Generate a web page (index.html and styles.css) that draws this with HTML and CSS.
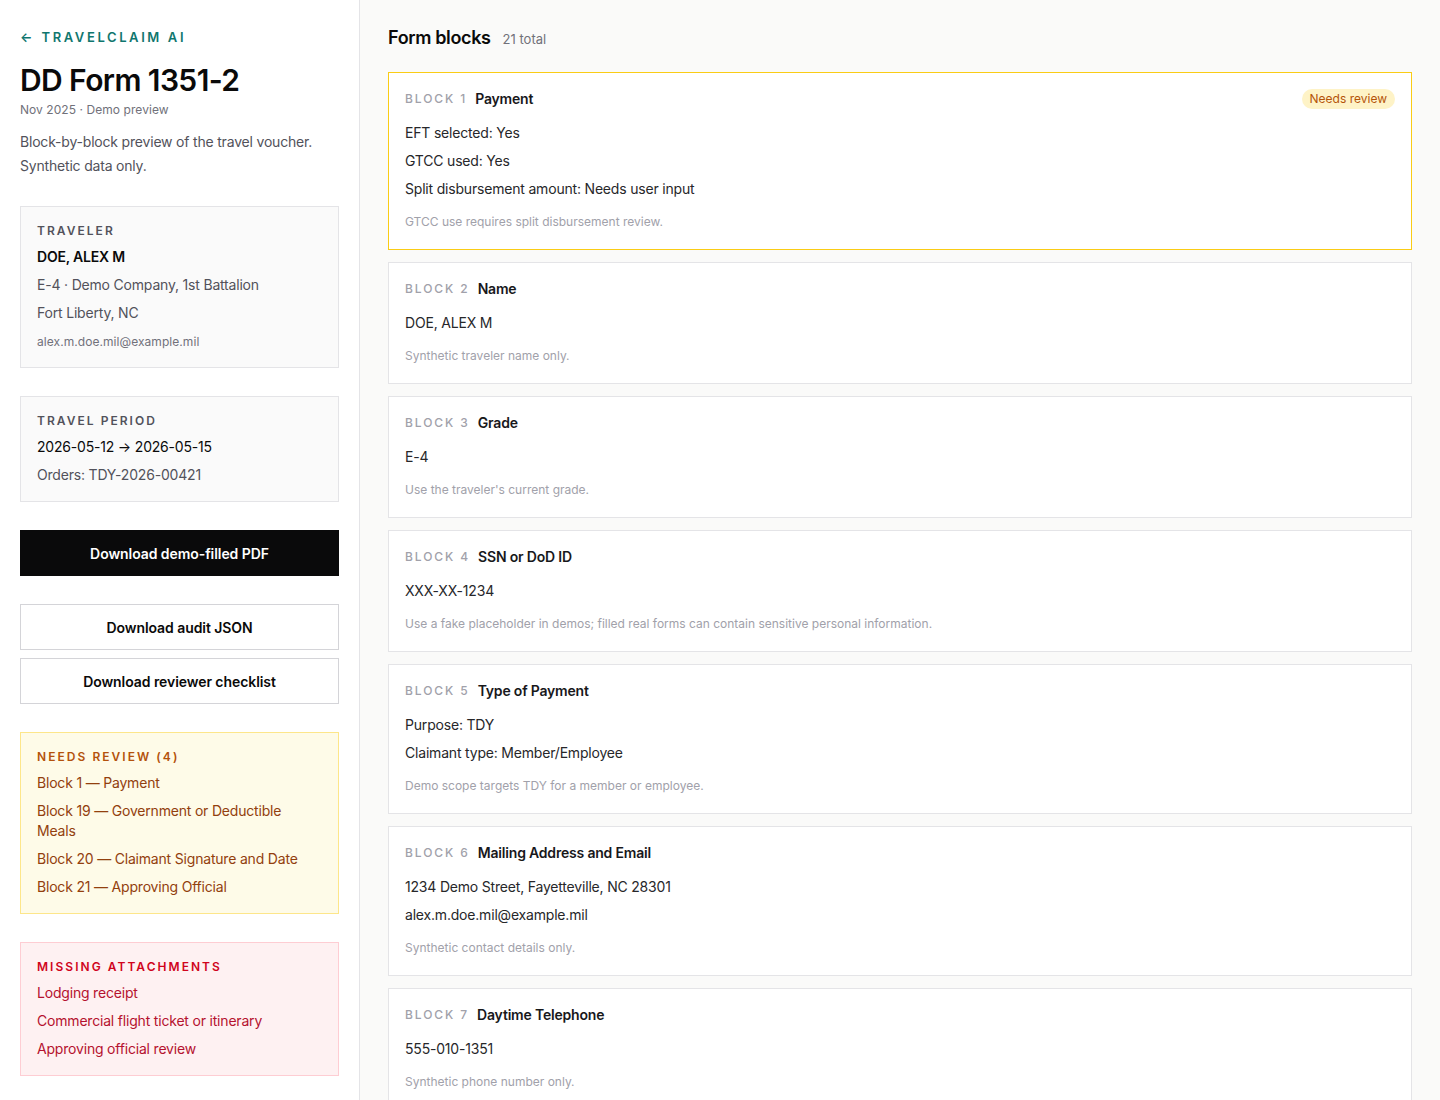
FILE: index.html
```html
<!DOCTYPE html>
<html lang="en">
<head>
<meta charset="utf-8">
<title>DD Form 1351-2 — TravelClaim AI</title>
<link rel="stylesheet" href="styles.css">
</head>
<body>
<div class="app">
  <aside class="sidebar">
    <header class="intro">
      <a class="back" href="#"><span class="back-arrow">←</span> TRAVELCLAIM AI</a>
      <h1 class="title">DD Form 1351-2</h1>
      <p class="meta">Nov 2025 · Demo preview</p>
      <p class="desc">Block-by-block preview of the travel voucher. Synthetic data only.</p>
    </header>

    <section class="panel">
      <h2 class="panel-label">TRAVELER</h2>
      <p class="panel-strong">DOE, ALEX M</p>
      <p class="panel-line">E-4 · Demo Company, 1st Battalion</p>
      <p class="panel-line">Fort Liberty, NC</p>
      <p class="panel-small">alex.m.doe.mil@example.mil</p>
    </section>

    <section class="panel">
      <h2 class="panel-label">TRAVEL PERIOD</h2>
      <p class="panel-dark">2026-05-12 → 2026-05-15</p>
      <p class="panel-line">Orders: TDY-2026-00421</p>
    </section>

    <button class="btn btn-primary">Download demo-filled PDF</button>

    <div class="btn-group">
      <button class="btn btn-outline">Download audit JSON</button>
      <button class="btn btn-outline">Download reviewer checklist</button>
    </div>

    <section class="panel panel-warn">
      <h2 class="panel-label">NEEDS REVIEW (4)</h2>
      <p class="panel-item">Block 1 — Payment</p>
      <p class="panel-item">Block 19 — Government or Deductible Meals</p>
      <p class="panel-item">Block 20 — Claimant Signature and Date</p>
      <p class="panel-item">Block 21 — Approving Official</p>
    </section>

    <section class="panel panel-danger">
      <h2 class="panel-label">MISSING ATTACHMENTS</h2>
      <p class="panel-item">Lodging receipt</p>
      <p class="panel-item">Commercial flight ticket or itinerary</p>
      <p class="panel-item">Approving official review</p>
    </section>
  </aside>

  <main class="main">
    <div class="main-head">
      <h2 class="main-title">Form blocks</h2>
      <span class="main-count">21 total</span>
    </div>

    <div class="blocks">
      <article class="block block-review">
        <div class="block-head">
          <span class="block-num">BLOCK 1</span>
          <span class="block-name">Payment</span>
          <span class="badge">Needs review</span>
        </div>
        <div class="block-values">
          <p>EFT selected: Yes</p>
          <p>GTCC used: Yes</p>
          <p>Split disbursement amount: Needs user input</p>
        </div>
        <p class="block-note">GTCC use requires split disbursement review.</p>
      </article>

      <article class="block">
        <div class="block-head">
          <span class="block-num">BLOCK 2</span>
          <span class="block-name">Name</span>
        </div>
        <div class="block-values">
          <p>DOE, ALEX M</p>
        </div>
        <p class="block-note">Synthetic traveler name only.</p>
      </article>

      <article class="block">
        <div class="block-head">
          <span class="block-num">BLOCK 3</span>
          <span class="block-name">Grade</span>
        </div>
        <div class="block-values">
          <p>E-4</p>
        </div>
        <p class="block-note">Use the traveler's current grade.</p>
      </article>

      <article class="block">
        <div class="block-head">
          <span class="block-num">BLOCK 4</span>
          <span class="block-name">SSN or DoD ID</span>
        </div>
        <div class="block-values">
          <p>XXX-XX-1234</p>
        </div>
        <p class="block-note">Use a fake placeholder in demos; filled real forms can contain sensitive personal information.</p>
      </article>

      <article class="block">
        <div class="block-head">
          <span class="block-num">BLOCK 5</span>
          <span class="block-name">Type of Payment</span>
        </div>
        <div class="block-values">
          <p>Purpose: TDY</p>
          <p>Claimant type: Member/Employee</p>
        </div>
        <p class="block-note">Demo scope targets TDY for a member or employee.</p>
      </article>

      <article class="block">
        <div class="block-head">
          <span class="block-num">BLOCK 6</span>
          <span class="block-name">Mailing Address and Email</span>
        </div>
        <div class="block-values">
          <p>1234 Demo Street, Fayetteville, NC 28301</p>
          <p>alex.m.doe.mil@example.mil</p>
        </div>
        <p class="block-note">Synthetic contact details only.</p>
      </article>

      <article class="block">
        <div class="block-head">
          <span class="block-num">BLOCK 7</span>
          <span class="block-name">Daytime Telephone</span>
        </div>
        <div class="block-values">
          <p>555-010-1351</p>
        </div>
        <p class="block-note">Synthetic phone number only.</p>
      </article>

      <article class="block">
        <div class="block-head">
          <span class="block-num">BLOCK 8</span>
          <span class="block-name">Mode of Travel</span>
        </div>
        <div class="block-values">
          <p>Commercial air</p>
        </div>
        <p class="block-note">Attach the flight itinerary.</p>
      </article>
    </div>
  </main>
</div>
</body>
</html>
```

FILE: styles.css
```css
* { box-sizing: border-box; }

html, body {
  margin: 0;
  padding: 0;
  height: 100%;
  overflow: hidden;
}

body {
  font-family: Inter, "Noto Sans", "Liberation Sans", sans-serif;
  color: #18181b;
  background: #fafaf9;
  letter-spacing: -0.012em;
  -webkit-font-smoothing: antialiased;
}

p, h1, h2 { margin: 0; }

.app {
  display: grid;
  grid-template-columns: 360px 1fr;
  height: 100vh;
}

/* Sidebar */
.sidebar {
  background: #ffffff;
  border-right: 1px solid #e4e4e7;
  padding: 28px 20px 28px 20px;
  display: flex;
  flex-direction: column;
  gap: 28px;
  overflow: hidden;
}

.sidebar > * { flex-shrink: 0; }

.intro { display: flex; flex-direction: column; }

.back {
  color: #0f766e;
  text-decoration: none;
  font-size: 13px;
  font-weight: 600;
  letter-spacing: 0.2em;
  line-height: 18px;
}
.back-arrow { letter-spacing: 0.25em; }

.title {
  margin-top: 16px;
  font-size: 30px;
  line-height: 36px;
  font-weight: 600;
  letter-spacing: -0.02em;
  color: #0a0a0a;
}

.meta {
  margin-top: 4px;
  font-size: 12px;
  line-height: 16px;
  letter-spacing: 0.005em;
  color: #71717a;
}

.desc {
  margin-top: 12px;
  font-size: 14px;
  line-height: 24px;
  color: #52525b;
}

.panel {
  background: #fafafa;
  border: 1px solid #e4e4e7;
  padding: 16px;
  display: flex;
  flex-direction: column;
  gap: 8px;
}

.panel-label {
  font-size: 12px;
  line-height: 16px;
  font-weight: 600;
  letter-spacing: 0.17em;
  color: #52525b;
}

.panel-strong {
  font-size: 14px;
  line-height: 20px;
  font-weight: 600;
  color: #0a0a0a;
}

.panel-dark {
  font-size: 14px;
  line-height: 20px;
  color: #0a0a0a;
}

.panel-line {
  font-size: 14px;
  line-height: 20px;
  color: #52525b;
}

.panel-small {
  font-size: 12px;
  line-height: 18px;
  letter-spacing: 0.005em;
  color: #71717a;
  margin-top: 2px;
}

.btn {
  display: block;
  width: 100%;
  height: 46px;
  font-family: inherit;
  font-size: 14px;
  font-weight: 600;
  letter-spacing: -0.005em;
  cursor: pointer;
  border-radius: 0;
}

.btn-primary {
  background: #0a0a0b;
  color: #ffffff;
  border: 1px solid #0a0a0b;
}

.btn-group {
  display: flex;
  flex-direction: column;
  gap: 8px;
}

.btn-group > * { flex-shrink: 0; }

.btn-outline {
  background: #ffffff;
  color: #0a0a0a;
  border: 1px solid #d4d4d8;
}

.panel-warn {
  background: #fefbe8;
  border-color: #fde68a;
}
.panel-warn .panel-label { color: #b4520c; }
.panel-warn .panel-item {
  font-size: 14px;
  line-height: 20px;
  color: #92400e;
}

.panel-danger {
  background: #fef1f2;
  border-color: #fecdd3;
}
.panel-danger .panel-label { color: #d0041c; }
.panel-danger .panel-item {
  font-size: 14px;
  line-height: 20px;
  color: #b5122f;
}

/* Main */
.main {
  padding: 25px 28px 28px;
  overflow: hidden;
}

.main-head {
  display: flex;
  align-items: baseline;
  gap: 12px;
  height: 26px;
  margin-bottom: 21px;
}

.main-title {
  font-size: 18px;
  line-height: 26px;
  font-weight: 600;
  letter-spacing: -0.02em;
  color: #0a0a0a;
}

.main-count {
  font-size: 13px;
  letter-spacing: 0;
  color: #71717a;
}

.blocks {
  display: flex;
  flex-direction: column;
  gap: 12px;
}

.block {
  background: #ffffff;
  border: 1px solid #e4e4e7;
  padding: 15px 16px 18px;
  flex-shrink: 0;
}

.block-review {
  border-color: #facc15;
}

.block-head {
  display: flex;
  align-items: center;
  gap: 8px;
  height: 20px;
}

.block-num {
  font-size: 12px;
  font-weight: 500;
  letter-spacing: 0.16em;
  color: #a1a1aa;
}

.block-name {
  font-size: 14px;
  font-weight: 600;
  color: #18181b;
}

.badge {
  margin-left: auto;
  background: #fef3c7;
  color: #b45309;
  font-size: 12px;
  line-height: 18px;
  padding: 1px 8px;
  border-radius: 999px;
  letter-spacing: 0;
  transform: translateY(1px);
}

.block-values {
  margin-top: 15px;
  display: flex;
  flex-direction: column;
  gap: 8px;
}

.block-values p {
  font-size: 14px;
  line-height: 20px;
  color: #27272a;
}

.block-note {
  margin-top: 14px;
  font-size: 12px;
  line-height: 18px;
  letter-spacing: 0;
  color: #a1a1aa;
}
```
